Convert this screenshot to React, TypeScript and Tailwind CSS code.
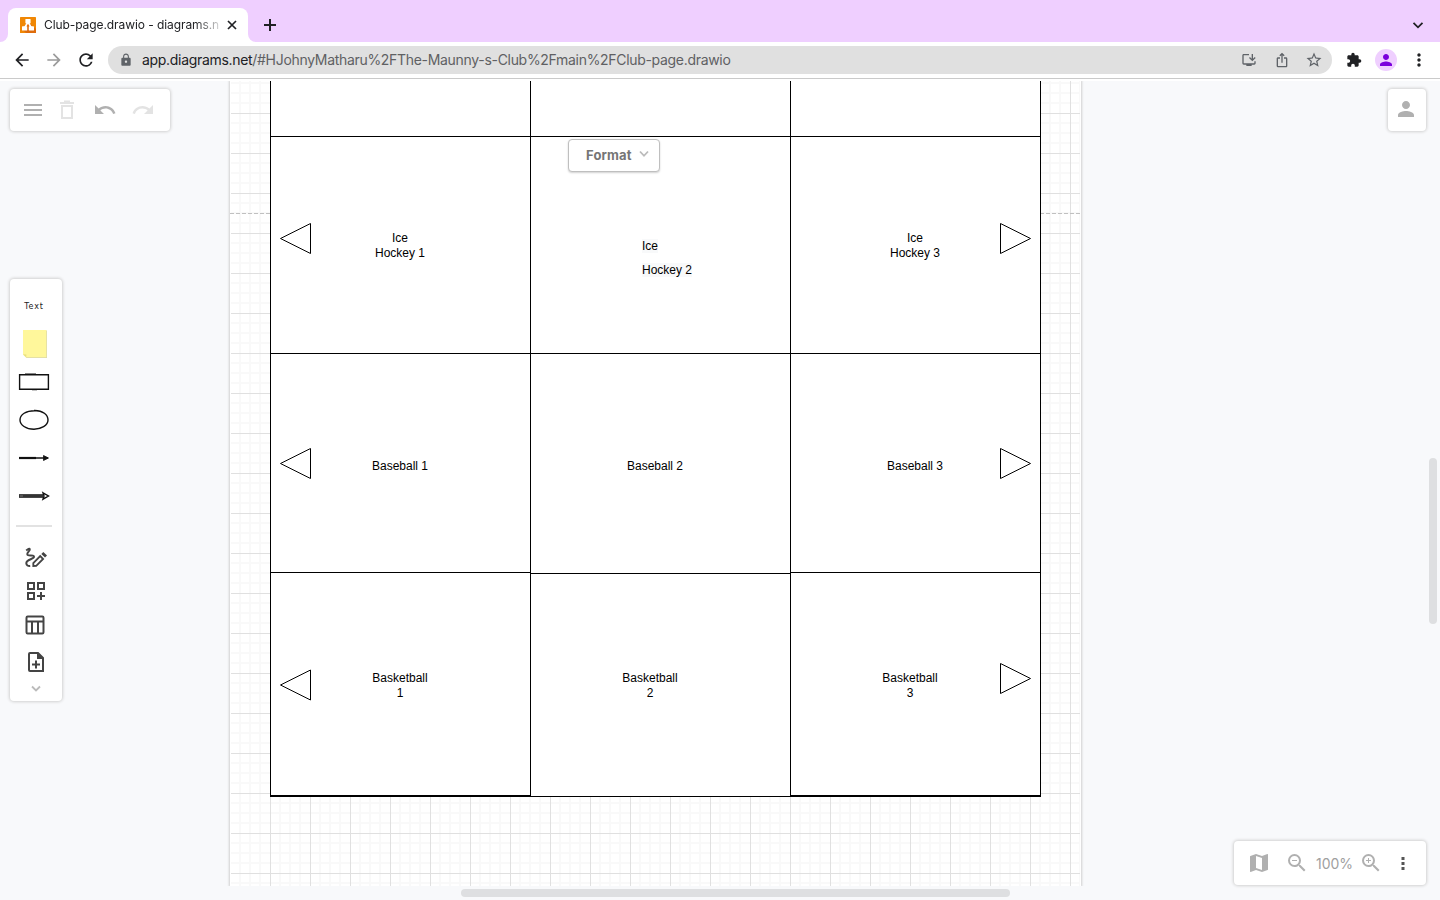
import type { ReactNode } from 'react';
import {
  MdArrowBack, MdArrowForward, MdRefresh, MdLock, MdInstallDesktop, MdIosShare, MdStarBorder,
  MdExtension, MdPerson, MdMoreVert, MdMenu, MdUndo, MdRedo, MdMap, MdZoomIn, MdZoomOut,
} from 'react-icons/md';

type Label = { lines: string[]; pos: string };

const labels: Label[] = [
  { lines: ['Ice', 'Hockey 1'], pos: 'left-[340px] top-[150px]' },
  { lines: ['Ice', 'Hockey 3'], pos: 'left-[855px] top-[150px]' },
  { lines: ['Baseball 1'], pos: 'left-[340px] top-[378px]' },
  { lines: ['Baseball 2'], pos: 'left-[595px] top-[378px]' },
  { lines: ['Baseball 3'], pos: 'left-[855px] top-[378px]' },
  { lines: ['Basketball', '1'], pos: 'left-[340px] top-[590px]' },
  { lines: ['Basketball', '2'], pos: 'left-[590px] top-[590px]' },
  { lines: ['Basketball', '3'], pos: 'left-[850px] top-[590px]' },
];

const triangles = [
  'M280.5 238.5L310.5 223.5V253.5Z', 'M1030.5 238.5L1000.5 223.5V253.5Z',
  'M280.5 463.5L310.5 448.5V478.5Z', 'M1030.5 463.5L1000.5 448.5V478.5Z',
  'M280.5 685L310.5 670V700Z', 'M1030.5 678.5L1000.5 663.5V693.5Z',
];

const shadow = 'rounded bg-white shadow-[0_0_3px_1px_#d1d1d1]';

function BrowserHeader() {
  return (
    <header className="flex h-[81px] flex-col bg-white [font-family:Inter,sans-serif]">
      <div className="flex h-[42px] shrink-0 items-end bg-[#efcfff]">
        <div className="flex h-[42px] w-2 items-end bg-white">
          <div className="h-full w-2 rounded-br-lg bg-[#efcfff]" />
        </div>
        <div className="flex h-[34px] w-[240px] items-center rounded-t-lg bg-white pl-3 pr-2">
          <svg width="16" height="16" viewBox="0 0 16 16">
            <rect width="16" height="16" rx="0.6" fill="#f08705" />
            <path d="M8 5L16 12V16H6L3 13Z" fill="#df6c0c" />
            <path d="M8 5L4.5 11M8 5L11.5 11" stroke="#fff" strokeWidth="1.6" />
            <rect x="5.4" y="2" width="5.2" height="4.4" rx="0.6" fill="#fff" />
            <rect x="2" y="9.2" width="5.2" height="4.4" rx="0.6" fill="#fff" />
            <rect x="8.8" y="9.2" width="5.2" height="4.4" rx="0.6" fill="#fff" />
          </svg>
          <div className="ml-2 w-[176px] overflow-hidden whitespace-nowrap text-[12px] tracking-[-0.08px] text-[#202124] [mask-image:linear-gradient(to_right,black_85%,transparent_103%)]">
            Club-page.drawio - diagrams.n
          </div>
          <svg width="10" height="10" viewBox="0 0 10 10" stroke="#202124" strokeWidth="1.7" className="ml-[7px] shrink-0">
            <path d="M1 1L9 9M9 1L1 9" />
          </svg>
        </div>
        <div className="flex h-[42px] w-2 bg-white">
          <div className="h-full w-2 rounded-bl-lg bg-[#efcfff]" />
        </div>
        <div className="flex h-[34px] flex-1 items-center justify-between pl-2 pr-[15px]">
          <svg width="12" height="12" viewBox="0 0 12 12" stroke="#202124" strokeWidth="2">
            <path d="M6 0V12M0 6H12" />
          </svg>
          <svg width="14" height="14" viewBox="0 0 14 14" fill="none" stroke="#202124" strokeWidth="1.8">
            <path d="M2.5 4.8L7 9.3L11.5 4.8" />
          </svg>
        </div>
      </div>
      <div className="flex h-9 shrink-0 items-center text-[#202124]">
        <MdArrowBack className="ml-3 size-5" />
        <MdArrowForward className="ml-3 size-5 text-[#9b9b9b]" />
        <MdRefresh className="ml-3 size-5" />
        <div className="ml-3 flex h-7 w-[1224px] items-center rounded-full bg-[#e0e0e0] pl-[11px] pr-[9px] text-[#5f6368]">
          <MdLock className="size-[14px]" />
          <div className="-mt-[2px] ml-[9px] flex-1 whitespace-nowrap text-[14px] tracking-[-0.31px] text-[#5f6063]">
            <span className="text-[#202124]">app.diagrams.net</span>
            /#HJohnyMatharu%2FThe-Maunny-s-Club%2Fmain%2FClub-page.drawio
          </div>
          <div className="flex items-center">
            <MdInstallDesktop className="mr-[17px] size-4" />
            <MdIosShare className="mr-[15px] size-4" />
            <MdStarBorder className="size-[18px]" />
          </div>
        </div>
        <MdExtension className="ml-[14px] size-4" />
        <div className="ml-[13px] flex size-[22px] items-center justify-center rounded-full bg-[#efcfff]">
          <MdPerson className="size-[18px] text-[#7b00dc]" />
        </div>
        <MdMoreVert className="ml-[12px] size-5" />
      </div>
      <div className="h-px bg-[#cacaca]" />
    </header>
  );
}

function DiagramPage() {
  return (
    <div className="absolute left-[230px] top-0 h-[805px] w-[851px] bg-white shadow-[0_0_2px_1px_#d1d1d1]">
      <svg className="absolute left-0 top-0" width="851" height="805" viewBox="230 81 851 805">
        <defs>
          <pattern id="grid" x="230" y="73" width="40" height="40" patternUnits="userSpaceOnUse">
            <path d="M10 0V40M20 0V40M30 0V40M0 10H40M0 20H40M0 30H40" stroke="#f9f9f9" strokeWidth="2" />
            <path d="M0.5 0V40M0 0.5H40" stroke="#e0e0e0" />
          </pattern>
        </defs>
        <rect x="231" y="81" width="849" height="805" fill="url(#grid)" />
        <path d="M230 213.5H1081" stroke="#c0c0c0" strokeDasharray="4 2" />
        <g fill="#fff" stroke="#000">
          <rect x="270.5" y="60.5" width="770" height="736" />
          <path d="M530.5 81V796M790.5 81V796M270 136.5H1041M270 353.5H1041M270 572.5H531M530 573.5H791M790 572.5H1041M270 795.5H531M790 795.5H1041" />
          {triangles.map((d) => <path key={d} d={d} />)}
        </g>
      </svg>
      <div className="text-[12px] leading-[15px] text-black">
        {labels.map((l) => (
          <div key={l.lines.join()} className={`absolute -ml-[230px] w-[120px] text-center ${l.pos}`}>
            {l.lines.map((t) => <div key={t}>{t}</div>)}
          </div>
        ))}
        <div className="absolute left-[412px] top-[153px] flex flex-col items-start leading-6">
          <div><span className="bg-[#f8f9fa]">Ice</span></div>
          <div><span className="bg-[#f8f9fa]">Hockey 2</span></div>
        </div>
      </div>
    </div>
  );
}

function Slot({ h, children }: { h: string; children: ReactNode }) {
  return <div className={`flex w-full items-center justify-center ${h}`}>{children}</div>;
}

function ShapeBar() {
  return (
    <aside className={`absolute left-[10px] top-[198px] flex h-[422px] w-[52px] flex-col items-center ${shadow}`}>
      <div className="flex h-[237px] w-[48px] flex-col items-center self-start pt-[8px]">
        <Slot h="h-[38px]">
          <span className="mt-px [font-family:'DejaVu_Sans',sans-serif] text-[8px] tracking-[0.8px] text-[#222]">Text</span>
        </Slot>
        <Slot h="h-[38px]">
          <svg width="26" height="30" viewBox="0 0 26 30" className="ml-[2px]">
            <path d="M1.5 1.5H25V29H4.5L1.5 26Z" fill="#ddd9a8" />
            <path d="M1 1H24.3V28.2H4L1 25.5Z" fill="#fff79b" />
            <path d="M1 25.3L4.4 25.6L4.2 28.2Z" fill="#e8df80" />
          </svg>
        </Slot>
        <Slot h="h-[38px]">
          <svg width="32" height="20" viewBox="0 0 32 20" fill="none" stroke="#111" strokeWidth="1.4">
            <path d="M1.6 2.7H30.4V17.2H1.6ZM7 2.2H18M14 17.5H19" />
          </svg>
        </Slot>
        <Slot h="h-[38px]">
          <svg width="32" height="22" viewBox="0 0 32 22" fill="none" stroke="#111" strokeWidth="1.4">
            <path d="M16 1.5C25 1.2 30 6 30 11C30 16.5 23 20.3 16 20.3C8 20.3 2 16 2 11C2 5.5 8 1.6 17 1.7" />
          </svg>
        </Slot>
        <Slot h="h-[38px]">
          <svg width="32" height="10" viewBox="0 0 32 10" fill="none" stroke="#111">
            <path d="M1 5H30" strokeWidth="1.5" />
            <path d="M1 5H18" strokeWidth="2.2" />
            <path d="M25.5 2.5L30.5 5L25.5 7.5Z" fill="#111" strokeWidth="0.8" />
          </svg>
        </Slot>
        <Slot h="h-[38px]">
          <svg width="32" height="10" viewBox="0 0 32 10" fill="none" stroke="#111">
            <path d="M1 5H25" stroke="#333" strokeWidth="3.8" />
            <path d="M2 5H5" stroke="#888" strokeWidth="0.8" />
            <path d="M25 1.8L30.5 5L25 8.2L26 5Z" fill="#fff" strokeWidth="1.4" />
          </svg>
        </Slot>
      </div>
      <div className="ml-[6px] mt-[9px] h-[2px] w-9 self-start bg-[#e2e2e2]" />
      <div className="flex w-full flex-col items-center pt-[19px]">
        <svg width="24" height="24" viewBox="0 0 24 24" fill="none" stroke="#444" strokeWidth="2">
          <path d="M2.2 4.5C4 3 5.5 2 5.8 3.2C6.2 5 2.5 6.5 3.3 8.5C4 10.6 10 8.2 10 10.8C10 13.3 2.2 13.4 2.3 17.2C2.4 19.3 4 20.2 6.2 20" />
          <path d="M9.3 20V17L16.2 10.1L19.1 13L12.2 19.9Z" strokeWidth="1.8" />
          <path d="M17.3 7.9L19.3 5.9L23 9.6L21 11.6Z" fill="#444" stroke="none" />
        </svg>
        <svg width="20" height="20" viewBox="0 0 20 20" fill="none" stroke="#444" strokeWidth="2" className="mt-[11px]">
          <path d="M2 2H8V8H2ZM12 2H18V8H12ZM2 12H8V18H2ZM15 11V19M11 15H19" />
        </svg>
        <svg width="20" height="20" viewBox="0 0 20 20" fill="none" stroke="#444" strokeWidth="2" className="mr-[2px] mt-[14px]">
          <rect x="1.5" y="1.5" width="17" height="17" rx="1.2" />
          <path d="M1 6.5H19M7 6.5V18M13 6.5V18" />
        </svg>
        <svg width="18" height="22" viewBox="0 0 18 22" fill="none" stroke="#444" strokeWidth="2" className="mt-[16px]">
          <path d="M3 2H11L16 7V20H3C2.4 20 2 19.6 2 19V3C2 2.4 2.4 2 3 2Z" />
          <path d="M10 1.5V8H16.5Z" fill="#444" stroke="none" />
          <path d="M9 9.5V17.5M5 13.5H13" />
        </svg>
        <svg width="10" height="8" viewBox="0 0 10 8" fill="none" stroke="#bbb" strokeWidth="1.8" className="mt-[12px]">
          <path d="M1 1.5L5 5.5L9 1.5" />
        </svg>
      </div>
    </aside>
  );
}

export default function App() {
  return (
    <div className="flex h-[900px] w-[1440px] flex-col overflow-hidden [font-family:'Liberation_Sans',Arial,sans-serif]">
      <BrowserHeader />
      <main className="relative flex-1 overflow-hidden bg-[#f8f9fb]">
        <div className="absolute left-0 top-0 h-[805px] w-[1427px] overflow-hidden">
          <DiagramPage />
        </div>

        <div className={`absolute left-[10px] top-[8px] flex h-[42px] w-[160px] items-center text-[#b0b0b0] ${shadow}`}>
          <MdMenu className="ml-[11px] size-6" />
          <svg width="16" height="20" viewBox="0 0 16 20" fill="none" stroke="#e3e3e3" strokeWidth="2" className="ml-[14px]">
            <path d="M1 3H15M5 1.5H11M3 6H13V18H3Z" />
          </svg>
          <MdUndo className="ml-[18px] size-6" />
          <MdRedo className="ml-[14px] size-6 text-[#e3e3e3]" />
        </div>

        <button className={`absolute left-[1388px] top-[8px] flex h-[42px] w-[38px] items-center justify-center text-[#b0b0b0] ${shadow}`}>
          <MdPerson className="-ml-[2px] -mt-[2px] size-6" />
        </button>

        <button className="absolute left-[568px] top-[58px] flex h-[33px] w-[92px] items-center rounded border border-[#bfbfbf] bg-white pl-[17px] [font-family:Inter,sans-serif] text-[13px] font-bold tracking-[0.15px] text-[#757575] shadow-[0_1px_2px_#d1d1d1]">
          <span className="w-[46px] text-left">Format</span>
          <svg width="10" height="8" viewBox="0 0 10 8" fill="none" stroke="#bbb" strokeWidth="1.8" className="-mt-1 ml-[7px]">
            <path d="M1 1.5L5 5.8L9 1.5" />
          </svg>
        </button>

        <ShapeBar />

        <div className={`absolute left-[1234px] top-[760px] flex h-[44px] w-[192px] items-center text-[#b0b0b0] ${shadow}`}>
          <MdMap className="ml-[13px] size-6" />
          <MdZoomOut className="ml-[14px] size-6" />
          <span className="ml-[7px] w-9 text-center [font-family:Inter,sans-serif] text-[14px] text-[#a0a0a0]">100%</span>
          <MdZoomIn className="ml-[7px] size-6" />
          <svg width="4" height="14" viewBox="0 0 4 14" fill="#555" className="ml-[18px] mt-px">
            <path d="M0.5 0H3.5V3H0.5ZM0.5 5H3.5V8H0.5ZM0.5 10H3.5V13H0.5Z" />
          </svg>
        </div>

        <div className="absolute left-[461px] top-[808px] h-2 w-[549px] rounded-full bg-[#dedfe1]" />
        <div className="absolute left-[1429px] top-[377px] h-[166px] w-2 rounded-full bg-[#dedfe1]" />
      </main>
    </div>
  );
}
